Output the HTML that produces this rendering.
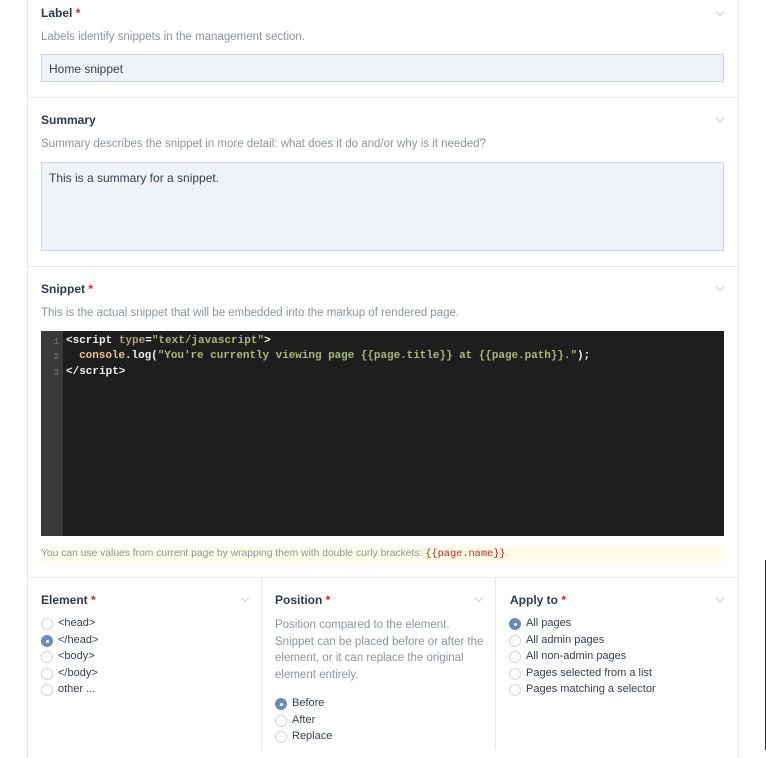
<!DOCTYPE html>
<html><head><meta charset="utf-8"><style>
*{box-sizing:border-box;margin:0;padding:0}
body{width:766px;height:750px;background:#fff;font-family:"Liberation Sans",sans-serif;position:relative;overflow:hidden;color:#354052}
.abs{position:absolute}
.card{left:27px;top:-2px;width:712px;height:760px;border-left:1px solid #e3e9ef;border-right:1px solid #e3e9ef}
.hr{position:absolute;left:28px;width:710px;height:1px;background:#e3e9ef}
.t{position:absolute;font-size:12px;font-weight:bold;color:#2b3a4e}
.t b{color:#e02020;font-weight:bold}
.d{position:absolute;font-size:11.5px;color:#8a94a0}
.chev{position:absolute;width:6px;height:6px;border-right:1px solid #c8d0d8;border-bottom:1px solid #c8d0d8;transform:rotate(45deg)}
.inp{position:absolute;background:#eff3f8;border:1px solid #c9d5e3;font-size:12px;color:#354052;padding:8px 7px}
.code{left:41px;top:331px;width:683px;height:205px;background:#1e1e1e;font-family:"Liberation Mono",monospace;font-size:11px;font-weight:bold}
.gut{left:0;top:0;width:22px;height:205px;background:#3a3a3a}
.ln{position:absolute;left:0;width:18px;text-align:right;color:#7a7a7a;font-size:9px;font-weight:normal}
.cl{position:absolute;left:25px;color:#f0f0f0;white-space:pre}
.r{position:absolute;font-size:11px;color:#354052}
.r i{position:absolute;left:-17px;top:1px;width:12px;height:12px;border:1px solid #cfd6de;border-radius:50%;background:#fff}
.r i.on{background:#6b8cb8;border-color:#6b8cb8}
.r i.on:after{content:"";position:absolute;left:3.5px;top:3.5px;width:3px;height:3px;background:#fff;border-radius:50%}
</style></head><body>
<div class="abs card"></div>
<div class="abs" style="left:765px;top:560px;width:1px;height:190px;background:#333"></div>

<div class="t" style="left:41px;top:6px">Label <b>*</b></div>
<div class="chev" style="left:717px;top:9px"></div>
<div class="d" style="left:41px;top:31px">Labels identify snippets in the management section.</div>
<div class="inp" style="left:41px;top:54px;width:683px;height:28px;padding-top:7px">Home snippet</div>
<div class="hr" style="top:97px"></div>

<div class="t" style="left:41px;top:113px">Summary</div>
<div class="chev" style="left:717px;top:115px"></div>
<div class="d" style="left:41px;top:138px">Summary describes the snippet in more detail: what does it do and/or why is it needed?</div>
<div class="inp" style="left:41px;top:162px;width:683px;height:89px">This is a summary for a snippet.</div>
<div class="hr" style="top:266px"></div>

<div class="t" style="left:41px;top:282px">Snippet <b>*</b></div>
<div class="chev" style="left:717px;top:284px"></div>
<div class="d" style="left:41px;top:307px">This is the actual snippet that will be embedded into the markup of rendered page.</div>
<div class="abs code">
 <div class="abs gut"></div>
 <div class="ln" style="top:6px">1</div><div class="ln" style="top:21px">2</div><div class="ln" style="top:37px">3</div>
 <div class="cl" style="top:4px">&lt;script <span style="color:#b0a080">type</span>=<span style="color:#a8b878">"text/javascript"</span>&gt;</div>
 <div class="cl" style="top:19px;letter-spacing:-0.05px">  <span style="color:#e8c090">console</span>.log(<span style="color:#a8b878">"You're currently viewing page {{page.title}} at {{page.path}}."</span>);</div>
 <div class="cl" style="top:35px">&lt;/script&gt;</div>
</div>
<div class="abs" style="left:41px;top:546px;width:683px;height:16px;background:#fefde6;font-size:10.3px;color:#8a94a0;padding-top:2px">You can use values from current page by wrapping them with double curly brackets: <span style="font-family:'Liberation Mono',monospace;color:#d0202a">{{page.name}}</span>.</div>
<div class="hr" style="top:577px"></div>
<div class="abs" style="left:261px;top:577px;width:1px;height:173px;background:#e3e9ef"></div>
<div class="abs" style="left:495px;top:577px;width:1px;height:173px;background:#e3e9ef"></div>

<div class="t" style="left:41px;top:593px">Element <b>*</b></div>
<div class="chev" style="left:242px;top:595px"></div>
<div class="r" style="left:58px;top:617px"><i></i>&lt;head&gt;</div>
<div class="r" style="left:58px;top:634px"><i class="on"></i>&lt;/head&gt;</div>
<div class="r" style="left:58px;top:650px"><i></i>&lt;body&gt;</div>
<div class="r" style="left:58px;top:667px"><i></i>&lt;/body&gt;</div>
<div class="r" style="left:58px;top:683px"><i></i>other ...</div>

<div class="t" style="left:275px;top:593px">Position <b>*</b></div>
<div class="chev" style="left:476px;top:595px"></div>
<div class="d" style="left:275px;top:617px;width:212px;line-height:16.5px">Position compared to the element. Snippet can be placed before or after the element, or it can replace the original element entirely.</div>
<div class="r" style="left:292px;top:697px"><i class="on"></i>Before</div>
<div class="r" style="left:292px;top:714px"><i></i>After</div>
<div class="r" style="left:292px;top:730px"><i></i>Replace</div>

<div class="t" style="left:510px;top:593px">Apply to <b>*</b></div>
<div class="chev" style="left:717px;top:595px"></div>
<div class="r" style="left:526px;top:617px"><i class="on"></i>All pages</div>
<div class="r" style="left:526px;top:634px"><i></i>All admin pages</div>
<div class="r" style="left:526px;top:650px"><i></i>All non-admin pages</div>
<div class="r" style="left:526px;top:667px"><i></i>Pages selected from a list</div>
<div class="r" style="left:526px;top:683px"><i></i>Pages matching a selector</div>
</body></html>
